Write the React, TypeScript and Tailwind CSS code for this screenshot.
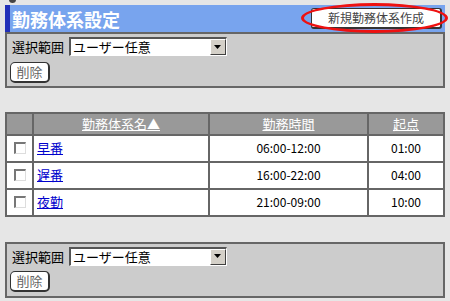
import React from "react";

const font = { fontFamily: '"Noto Sans CJK JP", "DejaVu Sans", sans-serif' };

function SelectBox() {
  return (
    <div className="flex h-[19px] w-[158px] items-stretch border-t-2 border-l-2 border-t-[#555] border-l-[#555] border-b border-r border-b-[#fff] border-r-[#fff] bg-white">
      <div className="flex-1 pl-[2px] text-[13px] leading-[16px] text-black">ユーザー任意</div>
      <div className="flex w-[16px] items-center justify-center border border-t-white border-l-white border-b-[#404040] border-r-[#404040] bg-[#d4d0c8]">
        <svg width="8" height="5" viewBox="0 0 8 5"><path d="M0 0h7l-3.5 4z" fill="#000" /></svg>
      </div>
    </div>
  );
}

function Panel() {
  return (
    <div className="flex h-[56px] flex-col border-2 border-[#666] bg-[#cccccc] pl-[3px] pt-[3px]">
      <div className="flex items-center gap-[5px]">
        <span className="pl-[2px] text-[13px] text-black">選択範囲</span>
        <SelectBox />
      </div>
      <div className="mt-[5px]">
        <button className="flex h-[21px] w-[40px] items-center justify-center rounded-[5px] border border-[#333] border-b-2 border-r-2 bg-white text-[13px] text-[#666]">
          削除
        </button>
      </div>
    </div>
  );
}

function Check() {
  return (
    <div className="mx-auto h-[12px] w-[12px] border-t-2 border-l-2 border-t-[#777] border-l-[#777] border-b border-r border-b-[#ddd] border-r-[#ddd] bg-white" />
  );
}

const rows = [
  { name: "早番", time: "06:00-12:00", start: "01:00" },
  { name: "遅番", time: "16:00-22:00", start: "04:00" },
  { name: "夜勤", time: "21:00-09:00", start: "10:00" },
];

export default function App() {
  return (
    <div className="relative h-[301px] w-[450px] overflow-hidden bg-[#e6e6e6] px-[5px] pt-[5px]" style={font}>
      <div className="absolute left-[9px] top-[-4px] h-[7px] w-[7px] rounded-full bg-[#444]" />
      <div className="flex h-[27px] items-center justify-between border-l-[5px] border-[#2230b8] bg-[#78a4ee] pr-[3px]">
        <span className="pl-[2px] text-[18px] font-bold leading-none text-white">勤務体系設定</span>
        <button className="flex h-[21px] w-[131px] items-center justify-center rounded-[3px] border border-[#333] border-b-2 border-r-2 bg-white text-[12px] text-[#444]">
          新規勤務体系作成
        </button>
      </div>
      <div className="pointer-events-none absolute left-[301px] top-[3px] h-[30px] w-[147px] rounded-[50%] border-[3px] border-[#ee1111]" />
      <Panel />
      <table className="mt-[24px] w-[440px] border-collapse border-2 border-[#666] text-[12px]">
        <thead>
          <tr className="h-[21px] bg-[#999999]">
            <th className="w-[27px] border-2 border-[#666]"></th>
            <th className="w-[176px] border-2 border-[#666] text-[13px] font-normal text-white underline">勤務体系名▲</th>
            <th className="w-[159px] border-2 border-[#666] text-[13px] font-normal text-white underline">勤務時間</th>
            <th className="border-2 border-[#666] text-[13px] font-normal text-white underline">起点</th>
          </tr>
        </thead>
        <tbody>
          {rows.map((r) => (
            <tr key={r.name} className="h-[27px] bg-white">
              <td className="border-2 border-[#666]"><Check /></td>
              <td className="border-2 border-[#666] pl-[3px] text-[13px] text-[#0000cc] underline">{r.name}</td>
              <td className="border-2 border-[#666] text-center text-black">{r.time}</td>
              <td className="border-2 border-[#666] text-center text-black">{r.start}</td>
            </tr>
          ))}
        </tbody>
      </table>
      <div className="mt-[25px]">
        <Panel />
      </div>
    </div>
  );
}
